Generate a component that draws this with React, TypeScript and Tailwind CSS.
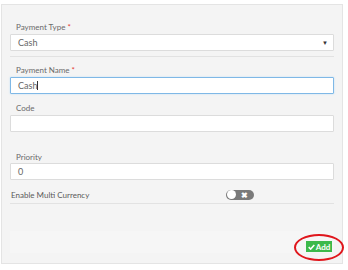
import React from 'react';

const Label: React.FC<{ text: string; required?: boolean; className?: string }> = ({ text, required, className }) => (
  <div className={`h-[10px] text-[8px] leading-[10px] text-[#6a6a6a] pl-[6px] ${className ?? ''}`}>
    {text}
    {required && <span className="text-[#e53935] ml-[2px]">*</span>}
  </div>
);

const Input: React.FC<{ value?: string; focused?: boolean; className?: string; children?: React.ReactNode }> = ({
  value,
  focused,
  className,
  children,
}) => (
  <div
    className={`h-[17px] flex items-center bg-white border rounded-[1px] pl-[7px] pr-[4px] text-[9px] text-[#666] ${
      focused ? 'border-[#7fb8e6] shadow-[0_0_2px_#b9dcf6]' : 'border-[#dcdcdc]'
    } ${className ?? ''}`}
  >
    <span className="flex-1">
      {value}
      {focused && <span className="inline-block w-px h-[9px] bg-[#333] align-[-1px]" />}
    </span>
    {children}
  </div>
);

export default function App() {
  return (
    <div className="relative w-[348px] h-[270px] bg-white pt-[4px] pl-[1px] font-['Lato','Liberation_Sans',sans-serif]">
      <div className="w-[342px] h-[260px] bg-[#f4f4f4] border border-[#e4e4e4] flex flex-col px-[8px]">
        <Label text="Payment Type" required className="mt-[17px]" />
        <Input value="Cash" className="mt-[2px]">
          <span className="text-[6px] text-[#333] mr-[1px]">▼</span>
        </Input>
        <div className="mt-[5px] border-t border-[#e2e2e2]" />

        <Label text="Payment Name" required className="mt-[8px]" />
        <Input value="Cash" focused className="mt-[2px]" />

        <Label text="Code" className="mt-[9px]" />
        <Input className="mt-[2px]" />

        <Label text="Priority" className="mt-[20px]" />
        <Input value="0" className="mt-[1px]" />

        <div className="mt-[8px] h-[13px] flex items-center">
          <span className="text-[8px] text-[#5a5a5a] pl-[1px]">Enable Multi Currency</span>
          <div className="ml-[137px] w-[28px] h-[10px] rounded-full bg-[#7a7a7a] flex items-center px-[1px]">
            <div className="w-[9px] h-[9px] rounded-full bg-white" />
            <span className="ml-[5px] text-[8px] leading-none font-bold text-white">✖</span>
          </div>
        </div>
        <div className="mt-[2px] border-t border-[#e2e2e2]" />

        <div className="mt-[27px] h-[22px] bg-[#f6f6f6] flex items-end justify-end pr-[2px]">
          <button className="mb-[1px] h-[11px] w-[26px] bg-[#3cb94b] text-white text-[8px] font-bold leading-none flex items-center justify-center gap-[1px]">
            <svg width="7" height="6" viewBox="0 0 10 8" fill="none">
              <path d="M1 4.2 L3.8 7 L9 1.2" stroke="white" strokeWidth="2.2" />
            </svg>
            Add
          </button>
        </div>
      </div>
      <div className="absolute left-[294px] top-[234px] w-[50px] h-[27px] rounded-[50%] border-2 border-[#e0161c]" />
    </div>
  );
}
